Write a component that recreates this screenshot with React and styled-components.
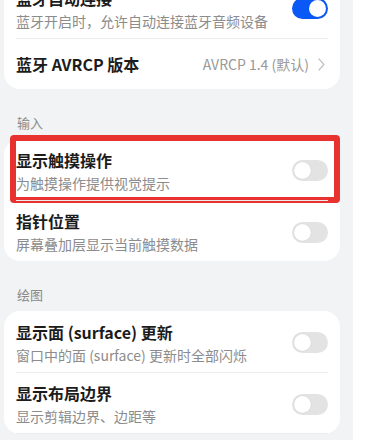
import styled, { createGlobalStyle } from 'styled-components'

const GlobalStyle = createGlobalStyle`
  html, body {
    margin: 0;
    padding: 0;
    background: #ffffff;
    overflow: hidden;
  }
  body {
    font-family: 'Noto Sans CJK SC', 'Noto Sans', sans-serif;
  }
`

// list is scrolled: the first card starts above the window, the last one runs past it
const sections = [
  {
    label: null,
    offset: true,
    items: [
      { title: '蓝牙自动连接', sub: '蓝牙开启时，允许自动连接蓝牙音频设备', on: true },
      { title: '蓝牙 AVRCP 版本', value: 'AVRCP 1.4 (默认)' },
    ],
  },
  {
    label: '输入',
    items: [
      { title: '显示触摸操作', sub: '为触摸操作提供视觉提示', marked: true },
      { title: '指针位置', sub: '屏幕叠加层显示当前触摸数据' },
    ],
  },
  {
    label: '绘图',
    continues: true,
    items: [
      { title: '显示面 (surface) 更新', sub: '窗口中的面 (surface) 更新时全部闪烁' },
      { title: '显示布局边界', sub: '显示剪辑边界、边距等' },
    ],
  },
]

const Chevron = () => (
  <svg width='7' height='13' viewBox='0 0 7 13'>
    <path d='M1 1 L6 6.5 L1 12' fill='none' stroke='#c4c4c4' strokeWidth='1.3' strokeLinecap='round' strokeLinejoin='round' />
  </svg>
)

const Settings = () => {
  return (
    <Page>
      <GlobalStyle />
      {sections.map((section, i) => (
        <div key={i}>
          {section.label && <SectionLabel>{section.label}</SectionLabel>}
          <Card $offset={section.offset} $continues={section.continues}>
            {section.items.map((item, j) => (
              <Row key={j} $single={!item.sub} $first={j === 0}>
                <TextCol>
                  <Title>{item.title}</Title>
                  {item.sub && <Sub>{item.sub}</Sub>}
                </TextCol>
                {item.value ? (
                  <Value>
                    {item.value}
                    <Chevron />
                  </Value>
                ) : (
                  <Switch $on={item.on} />
                )}
                {item.marked && <Marker />}
              </Row>
            ))}
          </Card>
        </div>
      ))}
    </Page>
  )
}

const Page = styled.div`
  width: 353px;
  height: 440px;
  background: #f1f3f5;
  overflow: hidden;
`

const SectionLabel = styled.div`
  padding: 25px 17px 7px;
  font-size: 13px;
  line-height: 18px;
  color: #8a8a8a;
`

const Card = styled.div`
  margin: ${(p) => (p.$offset ? '-23px' : '0')} 13px 0 4px;
  background: #ffffff;
  border-radius: 16px;
  padding: 0 12px;
  &::after {
    content: '';
    display: ${(p) => (p.$continues ? 'block' : 'none')};
    height: 1px;
    background: #ececec;
  }
`

const Row = styled.div`
  position: relative;
  display: flex;
  align-items: center;
  justify-content: space-between;
  height: ${(p) => (p.$single ? '51px' : '61px')};
  box-sizing: border-box;
  padding: ${(p) => (p.$single ? '0' : '9px 0 7px')};
  border-top: ${(p) => (p.$first ? 'none' : '1px solid #ececec')};
`

const TextCol = styled.div`
  display: flex;
  flex-direction: column;
  gap: 2px;
  min-width: 0;
`

const Title = styled.div`
  font-size: 16px;
  line-height: 22px;
  font-weight: 600;
  color: #1c1c1c;
  white-space: nowrap;
`

const Sub = styled.div`
  font-size: 14px;
  line-height: 20px;
  color: #8c8c8c;
  white-space: nowrap;
`

const Value = styled.div`
  display: flex;
  align-items: center;
  gap: 9px;
  font-size: 14px;
  color: #999999;
  padding-right: 3px;
`

const Switch = styled.div`
  position: relative;
  flex: none;
  width: 36px;
  height: 21px;
  border-radius: 11px;
  background: ${(p) => (p.$on ? '#0a59f7' : '#e3e3e3')};
  &::after {
    content: '';
    position: absolute;
    top: 2px;
    left: ${(p) => (p.$on ? '17px' : '2px')};
    width: 17px;
    height: 17px;
    border-radius: 50%;
    background: #ffffff;
    box-shadow: 0 0 1px rgba(0, 0, 0, 0.2);
  }
`

const Marker = styled.div`
  position: absolute;
  top: -4px;
  left: -6px;
  right: -12px;
  bottom: -3px;
  border: 6px solid #e8322f;
  border-radius: 4px;
  pointer-events: none;
`

export default Settings
